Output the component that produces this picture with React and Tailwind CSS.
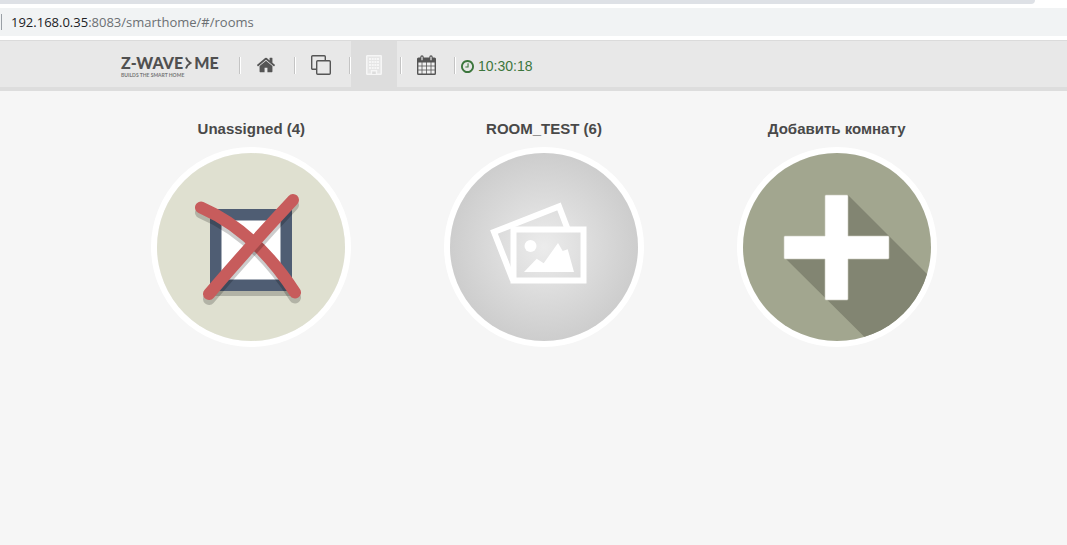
const HomeIcon = () => (
  <svg viewBox="0 0 1792 1792" className="w-5 h-5" fill="currentColor" aria-hidden="true">
    <path d="M1472 992v480q0 26-19 45t-45 19h-384v-384h-256v384h-384q-26 0-45-19t-19-45v-480q0-1 .5-3t.5-3l575-474 575 474q1 2 1 6zm223-69l-62 74q-8 9-21 11h-3q-13 0-21-7l-692-577-692 577q-12 8-24 7-13-2-21-11l-62-74q-8-10-7-23.5t11-21.5l719-599q32-26 76-26t76 26l244 204v-195q0-14 9-23t23-9h192q14 0 23 9t9 23v408l219 182q10 8 11 21.5t-7 23.5z" />
  </svg>
)

const ElementsIcon = () => (
  <svg viewBox="0 0 20 20" className="w-5 h-5" fill="none" stroke="currentColor" strokeWidth="1.4" aria-hidden="true">
    <rect x="5.7" y="5.7" width="13.6" height="13.6" rx="1" />
    <path d="M5.7 14.3H1.7a1 1 0 0 1-1-1V1.7a1 1 0 0 1 1-1H13.3a1 1 0 0 1 1 1V5.7" />
  </svg>
)

const floors = [3, 6, 9, 12]

const RoomsIcon = () => (
  <svg viewBox="0 0 16 20" className="w-4 h-5" fill="none" aria-hidden="true">
    <rect width="16" height="20" rx="1" fill="currentColor" opacity="0.4" />
    <rect x="0.8" y="0.8" width="14.4" height="18.4" rx="0.6" stroke="currentColor" strokeWidth="1.6" />
    {floors.map((y) => (
      <g key={y} fill="currentColor">
        <rect x="3" y={y} width="2" height="2" />
        <rect x="5.7" y={y} width="2" height="2" />
        <rect x="8.4" y={y} width="2" height="2" />
        <rect x="11" y={y} width="2" height="2" />
      </g>
    ))}
    <path d="M5.5 19V15.7h5V19" fill="#dddddd" stroke="currentColor" strokeWidth="1.4" />
  </svg>
)

const EventsIcon = () => (
  <svg viewBox="0 0 19 20" className="w-[19px] h-5" fill="none" stroke="currentColor" aria-hidden="true">
    <rect x="0.7" y="3.2" width="17.6" height="16.1" rx="0.8" fill="#f0f0f0" strokeWidth="1.4" />
    <path d="M0.7 3.2h17.6v4.3H0.7z" fill="currentColor" stroke="none" />
    <path d="M5 7v12M9.5 7v12M14 7v12M1 11h17M1 15h17" strokeWidth="0.8" />
    <path d="M5 2v3M14 2v3" strokeWidth="3.4" strokeLinecap="round" />
    <path d="M5 1.8v3.4M14 1.8v3.4" stroke="#e8e8e8" strokeWidth="1.2" />
  </svg>
)

const ClockIcon = () => (
  <svg viewBox="128 128 1536 1536" className="w-[13px] h-[13px]" fill="currentColor" aria-hidden="true">
    <path d="M1024 544v448q0 14-9 23t-23 9h-320q-14 0-23-9t-9-23v-64q0-14 9-23t23-9h224v-352q0-14 9-23t23-9h64q14 0 23 9t9 23zm416 352q0-148-73-273t-198-198-273-73-273 73-198 198-73 273 73 273 198 198 273 73 273-73 198-198 73-273zm224 0q0 209-103 385.5t-279.5 279.5-385.5 103-385.5-103-279.5-279.5-103-385.5 103-385.5 279.5-279.5 385.5-103 385.5 103 279.5 279.5 103 385.5z" />
  </svg>
)

const UnassignedArt = () => (
  <svg viewBox="0 0 188 188" className="w-full h-full" aria-hidden="true">
    <rect width="188" height="188" fill="#dfe0d0" />
    <rect x="53" y="61" width="82" height="82" rx="2" fill="#000" opacity="0.2" />
    <rect x="53" y="56" width="82" height="82" rx="2" fill="#4f5d73" />
    <rect x="64.5" y="67.5" width="59" height="59" fill="#fff" />
    <g fill="none" strokeWidth="12" strokeLinecap="round">
      <path d="M44 59.500Q98 82 138 144.500" stroke="#000" opacity="0.2" />
      <path d="M44 54.500Q98 78 138 139.500" stroke="#c75c5c" />
      <path d="M52 146Q93 98 136 52" stroke="#000" opacity="0.2" />
      <path d="M52 141Q93 93 136 47" stroke="#c75c5c" />
    </g>
  </svg>
)

const RoomArt = () => (
  <svg viewBox="0 0 188 188" className="w-full h-full" aria-hidden="true">
    <defs>
      <radialGradient id="roomGlow" gradientUnits="userSpaceOnUse" cx="94" cy="94" r="94">
        <stop offset="0" stopColor="#ececec" />
        <stop offset="0.5" stopColor="#dcdcdc" />
        <stop offset="1" stopColor="#cdcdcd" />
      </radialGradient>
    </defs>
    <rect width="188" height="188" fill="url(#roomGlow)" />
    <g fill="none" stroke="#fff" strokeWidth="6">
      <path d="M63 127.500L44 79L109 53.500L118 77" />
      <rect x="63.5" y="76.5" width="70" height="51" />
    </g>
    <circle cx="80.5" cy="93" r="6" fill="#fff" />
    <path d="M74 119L86.700 105.700L93.700 110.300L108 90L112.700 98L117.700 96.300L124 119z" fill="#fff" />
  </svg>
)

const AddArt = () => (
  <svg viewBox="0 0 188 188" className="w-full h-full" aria-hidden="true">
    <rect width="188" height="188" fill="#a2a68f" />
    <path d="M105 42L251 188V250H188L42 105H104V42z" fill="#828572" />
    <path d="M83 42h21a1 1 0 0 1 1 1v40h40a1 1 0 0 1 1 1v21a1 1 0 0 1-1 1h-40v40a1 1 0 0 1-1 1H83a1 1 0 0 1-1-1v-40H42a1 1 0 0 1-1-1V84a1 1 0 0 1 1-1h40V43a1 1 0 0 1 1-1z" fill="#fff" stroke="#c9cbbd" strokeWidth="0.6" />
  </svg>
)

const navItems = [
  { name: 'Home', href: '#/dashboard', icon: <HomeIcon />, active: false },
  { name: 'Elements', href: '#/elements', icon: <ElementsIcon />, active: false },
  { name: 'Rooms', href: '#/rooms', icon: <RoomsIcon />, active: true },
  { name: 'Events', href: '#/events', icon: <EventsIcon />, active: false },
]

const rooms = [
  { title: 'Unassigned (4)', href: '#/rooms/0', art: <UnassignedArt /> },
  { title: 'ROOM_TEST (6)', href: '#/rooms/1', art: <RoomArt /> },
  { title: 'Добавить комнату', href: '#/rooms/add', art: <AddArt /> },
]

const AddressBar = () => (
  <div className="bg-white pb-1">
    <div className="h-1 mr-8 bg-[#dee1e6] rounded-br-lg" />
    <div className="mt-1 h-7 bg-[#f1f3f4] flex items-center">
      <span className="w-px h-4 ml-px bg-[#9aa0a6]" />
      <p className="ml-[9px] pt-px text-[13px] text-[#6b6f73] font-['Open_Sans','Noto_Sans',sans-serif]">
        <span className="text-[#202124]">192.168.0.35</span>:8083/smarthome/#/rooms
      </p>
    </div>
  </div>
)

const Logo = () => (
  <a href="#/" className="block w-[98px] mr-5 pt-1 text-[#505050] font-[Lato,sans-serif]">
    <span className="flex items-center text-base leading-[18px] font-black">
      Z-WAVE
      <svg viewBox="0 0 7 12" className="w-[7px] h-3 mx-0.5" fill="none" stroke="currentColor" strokeWidth="2" aria-hidden="true">
        <path d="M1 0.500Q2 4 5.500 6Q2 8 1 11.500" />
      </svg>
      ME
    </span>
    <span className="block text-[5px] leading-[6px] font-bold text-[#777777] whitespace-nowrap">BUILDS THE SMART HOME</span>
  </a>
)

const Separator = () => (
  <span className="w-[2px] h-[17px] mt-0.5 bg-[#c4c4c4] border-r border-white" />
)

const Header = () => (
  <header className="h-[51px] pl-[121px] flex items-center bg-[#e8e8e8] border-t border-t-[#dbdbdb] border-b-4 border-b-[#dddddd]">
    <Logo />
    <nav className="h-full flex items-center gap-[3px]">
      {navItems.map((item) => (
        <div key={item.name} className="h-full flex items-center">
          <Separator />
          <a
            href={item.href}
            aria-label={item.name}
            className={`h-full px-[15px] pt-0.5 flex items-center ${item.active ? 'bg-[#dddddd] text-[#f6f6f6]' : 'text-[#555555]'}`}
          >
            {item.icon}
          </a>
        </div>
      ))}
      <Separator />
      <div className="pl-0.5 pt-1 flex items-center gap-1 text-sm text-[#3c763d] whitespace-nowrap">
        <ClockIcon />
        <time>10:30:18</time>
      </div>
    </nav>
  </header>
)

const RoomCard = ({ room }) => (
  <a href={room.href} className="flex flex-col items-center">
    <h2 className="mb-2 text-[15px] leading-5 font-bold text-[#494949]">{room.title}</h2>
    <div className="w-[200px] h-[200px] rounded-full border-[6px] border-white overflow-hidden">
      {room.art}
    </div>
  </a>
)

const App = () => {
  return (
    <div className="min-h-screen bg-[#f6f6f6] font-['Liberation_Sans',Arial,sans-serif]">
      <AddressBar />
      <Header />
      <main className="pt-7 pl-[105px] pr-[84px] grid grid-cols-3">
        {rooms.map((room) => (
          <RoomCard key={room.title} room={room} />
        ))}
      </main>
    </div>
  )
}

export default App
